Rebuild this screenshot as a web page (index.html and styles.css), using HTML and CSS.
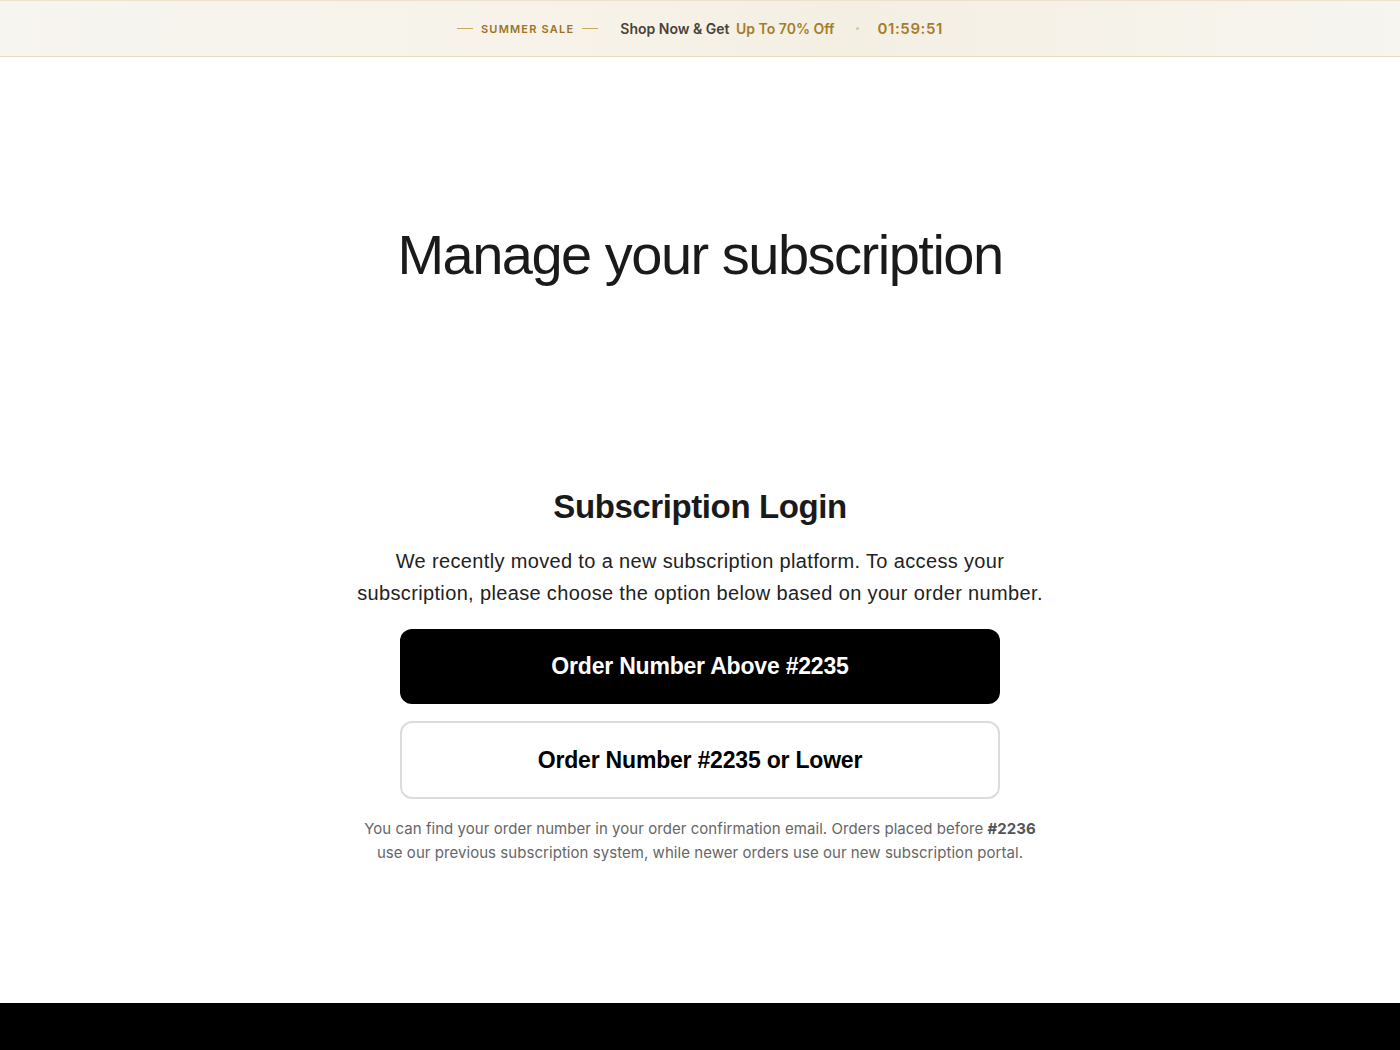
FILE: index.html
```html
<!DOCTYPE html>
<html lang="en">
<head>
<meta charset="utf-8">
<title>Manage your subscription</title>
<link rel="stylesheet" href="styles.css">
</head>
<body>
<div class="promo">
  <div class="promo-inner">
    <span class="promo-tag"><span class="rule"></span>SUMMER SALE<span class="rule"></span></span>
    <span class="promo-text">Shop Now &amp; Get <span class="gold">Up To 70% Off</span></span>
    <span class="dot"></span>
    <span class="timer">01:59:51</span>
  </div>
</div>
<main class="main">
  <h1 class="title">Manage your subscription</h1>
  <section class="login">
    <h2 class="login-title">Subscription Login</h2>
    <p class="login-desc">We recently moved to a new subscription platform. To access your subscription, please choose the option below based on your order number.</p>
    <a class="btn btn-dark" href="#">Order Number Above #2235</a>
    <a class="btn btn-light" href="#">Order Number #2235 or Lower</a>
    <p class="note">You can find your order number in your order confirmation email. Orders placed before <b>#2236</b> use our previous subscription system, while newer orders use our new subscription portal.</p>
  </section>
</main>
<footer class="footer"></footer>
</body>
</html>
```
FILE: styles.css
```css
* { box-sizing: border-box; }
html, body { margin: 0; padding: 0; }
body {
  font-family: "Liberation Sans", Arial, sans-serif;
  color: #1a1a1a;
  background: #fff;
}
.promo {
  height: 57px;
  border-top: 1px solid #ede3cc;
  border-bottom: 1px solid #e9dcbf;
  background: linear-gradient(90deg, #f7f5f0 0%, #f6f2e8 45%, #f4efe3 60%, #f7f5f0 100%);
  display: flex;
  align-items: center;
  justify-content: center;
  font-family: Inter, "Liberation Sans", Arial, sans-serif;
}
.promo-inner {
  display: flex;
  align-items: center;
}
.promo-tag {
  display: flex;
  align-items: center;
  gap: 8px;
  font-size: 11px;
  font-weight: 600;
  letter-spacing: 1.2px;
  color: #9a7328;
}
.rule {
  display: inline-block;
  width: 16px;
  height: 1px;
  background: #c9a65c;
}
.promo-text {
  margin-left: 22px;
  font-size: 14px;
  font-weight: 600;
  color: #4a4238;
  letter-spacing: 0;
}
.gold { color: #a67d27; margin-left: 3px; }
.dot {
  width: 3px;
  height: 3px;
  border-radius: 50%;
  background: #d8c79f;
  margin: 0 19px 0 21px;
}
.timer {
  font-size: 15px;
  font-weight: 600;
  color: #a67d27;
  letter-spacing: 0.6px;
}
.main {
  height: 946px;
  display: flex;
  flex-direction: column;
  align-items: center;
}
.title {
  margin: 163px 0 0;
  font-size: 56px;
  font-weight: 400;
  letter-spacing: -1.5px;
  line-height: 70px;
  color: #1a1a1a;
}
.login {
  margin-top: 196px;
  width: 720px;
  display: flex;
  flex-direction: column;
  align-items: center;
}
.login-title {
  margin: 0;
  font-size: 33px;
  font-weight: 700;
  letter-spacing: -0.4px;
  line-height: 42px;
  color: #1a1a1a;
}
.login-desc {
  margin: 17px 0 0;
  max-width: 700px;
  font-size: 20px;
  line-height: 32px;
  letter-spacing: 0.35px;
  text-align: center;
  color: #222;
}
.btn {
  display: flex;
  align-items: center;
  justify-content: center;
  width: 600px;
  text-decoration: none;
  font-size: 23px;
  font-weight: 700;
  letter-spacing: -0.2px;
  border-radius: 12px;
}
.btn-dark {
  margin-top: 20px;
  height: 75px;
  background: #000;
  color: #fff;
}
.btn-light {
  margin-top: 17px;
  height: 78px;
  background: #fff;
  color: #000;
  border: 2px solid #dcdcdc;
}
.note {
  margin: 18px 0 0;
  max-width: 685px;
  font-family: Inter, "Liberation Sans", Arial, sans-serif;
  font-size: 15px;
  line-height: 24px;
  letter-spacing: 0.05px;
  color: #666;
  text-align: center;
}
.note b { color: #555; font-weight: 700; }
.footer {
  height: 48px;
  background: #000;
}
```
